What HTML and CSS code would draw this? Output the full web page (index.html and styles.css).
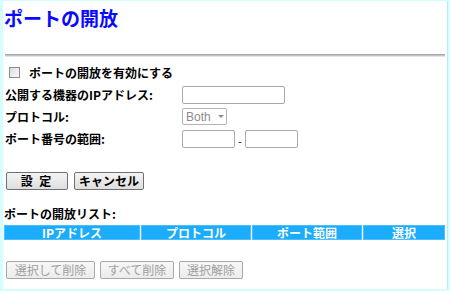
FILE: index.html
```html
<!DOCTYPE html>
<html lang="ja">
<head>
<meta charset="utf-8">
<link rel="stylesheet" href="styles.css">
</head>
<body>
<div class="page">
  <h1 class="title">ポートの開放</h1>
  <div class="rule"></div>
  <label class="enable"><span class="check"></span>ポートの開放を有効にする</label>
  <div class="form">
    <div class="lbl">公開する機器のIPアドレス:</div>
    <div class="field"><span class="input wide"></span></div>
    <div class="lbl">プロトコル:</div>
    <div class="field"><span class="select">Both<span class="arrow"></span></span></div>
    <div class="lbl">ポート番号の範囲:</div>
    <div class="field"><span class="input narrow"></span><span class="dash">-</span><span class="input narrow"></span></div>
  </div>
  <div class="actions">
    <button class="btn set">設 定</button>
    <button class="btn cancel">キャンセル</button>
  </div>
  <div class="listtitle">ポートの開放リスト:</div>
  <table class="list">
    <tr>
      <th class="c1">IPアドレス</th>
      <th class="c2">プロトコル</th>
      <th class="c3">ポート範囲</th>
      <th class="c4">選択</th>
    </tr>
  </table>
  <div class="bottom">
    <button class="btn dis b1">選択して削除</button>
    <button class="btn dis b2">すべて削除</button>
    <button class="btn dis b3">選択解除</button>
  </div>
</div>
</body>
</html>
```
FILE: styles.css
```css
html, body {
  margin: 0;
  padding: 0;
  background: #d4ffff;
}
body {
  width: 450px;
  height: 291px;
  overflow: hidden;
  font-family: "Noto Sans CJK JP", "Noto Sans", sans-serif;
  font-size: 12px;
  color: #000;
}
.page {
  box-sizing: border-box;
  margin: 1px 2px 0 3px;
  height: 288px;
  background: #fff;
  padding: 0 2px 0 1px;
  border-right: 1px solid #b8eeee;
}
.title {
  margin: 0;
  padding-top: 3px;
  height: 27px;
  font-size: 19px;
  line-height: 27px;
  font-weight: bold;
  color: #0a0aff;
}
.rule {
  margin: 23px 0 0 1px;
  height: 1px;
  background: #c4c4c4;
  border-top: 1px solid #a8a8a8;
  border-bottom: 1px solid #e4e4e4;
}
.enable {
  display: flex;
  align-items: center;
  margin-top: 8px;
  height: 14px;
  font-weight: bold;
  padding-left: 5px;
}
.check {
  width: 11px;
  height: 11px;
  box-sizing: border-box;
  border: 1px solid #8a8a8a;
  background: linear-gradient(135deg, #dcdcdc, #fbfbfb);
  margin-right: 9px;
}
.form {
  display: grid;
  grid-template-columns: 178px auto;
  grid-auto-rows: 21px;
  row-gap: 1px;
  margin-top: 5px;
  align-items: center;
}
.lbl {
  font-weight: bold;
  padding-left: 1px;
  line-height: 14px;
}
.field {
  display: flex;
  align-items: center;
}
.input {
  display: inline-block;
  box-sizing: border-box;
  height: 18px;
  border: 1px solid #a9a9a9;
  border-radius: 2px;
  background: #fff;
}
.wide { width: 103px; }
.narrow { width: 53px; }
.dash {
  width: 10px;
  text-align: center;
  font-size: 11px;
  line-height: 18px;
  padding-top: 4px;
}
.select {
  display: inline-flex;
  align-items: center;
  box-sizing: border-box;
  width: 45px;
  height: 17px;
  border: 1px solid #b4b4b4;
  border-radius: 2px;
  color: #8c8c8c;
  font-family: "Liberation Sans", Arial, sans-serif;
  font-size: 12px;
  padding-left: 3px;
}
.arrow {
  margin-left: 7px;
  width: 0;
  height: 0;
  border-left: 3px solid transparent;
  border-right: 3px solid transparent;
  border-top: 3px solid #909090;
}
.actions {
  display: flex;
  gap: 6px;
  margin-top: 23px;
  padding-left: 2px;
}
.btn {
  box-sizing: border-box;
  height: 18px;
  padding: 0;
  font-family: "Noto Sans CJK JP", sans-serif;
  font-size: 12px;
  line-height: 14px;
  border: 1px solid #707070;
  border-radius: 2px;
  background: linear-gradient(#f4f4f4, #dedede);
  color: #000;
}
.set { width: 62px; font-weight: bold; letter-spacing: 2px; }
.cancel { width: 70px; font-weight: bold; }
.listtitle {
  margin-top: 17px;
  font-weight: bold;
  line-height: 14px;
}
.list {
  margin-top: 4px;
  width: 443px;
  border-collapse: separate;
  border-spacing: 1px 0;
  margin-left: -1px;
}
.list th {
  height: 15px;
  padding: 0;
  box-sizing: border-box;
  background: #1cacfc;
  border: 1px solid #48c0ff;
  color: #fff;
  font-size: 12px;
  line-height: 12px;
  font-weight: bold;
}
.c1 { width: 136px; }
.c2 { width: 110px; }
.c3 { width: 110px; }
.bottom {
  display: flex;
  gap: 5px;
  margin-top: 21px;
  padding-left: 2px;
}
.dis {
  color: #a0a0a0;
  border-color: #a8a8a8;
  background: linear-gradient(#f7f7f7, #ececec);
  font-weight: normal;
}
.b1 { width: 89px; }
.b2 { width: 74px; }
.b3 { width: 64px; }
```
